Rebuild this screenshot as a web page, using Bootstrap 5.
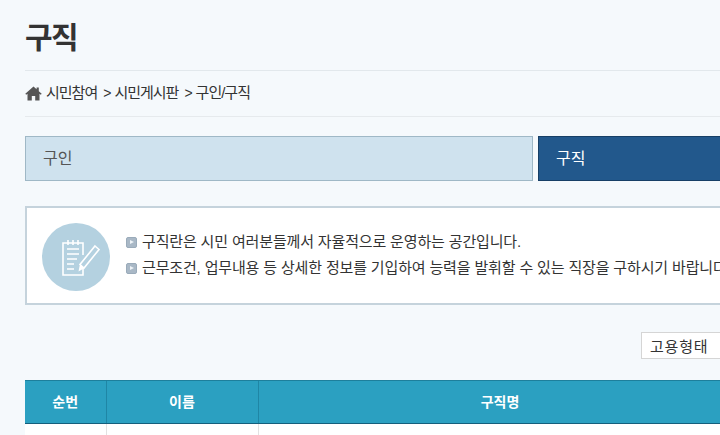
<!DOCTYPE html>
<html lang="ko">

<head>
    <meta charset="UTF-8">
    <title>구직</title>
    <link href="https://cdn.jsdelivr.net/npm/bootstrap@5.3.2/dist/css/bootstrap.min.css" rel="stylesheet">
    <style>
        html, body {
            overflow: hidden;
        }

        body {
            width: 720px;
            height: 435px;
            background: #f5f9fc;
            font-family: "Liberation Sans", "Noto Sans CJK KR", sans-serif;
            color: #333;
        }

        .page-wrap {
            width: 1021px;
            margin-left: 25px;
        }

        .page-title {
            height: 71px;
            margin: 0;
            padding-top: 19px;
            font-size: 30px;
            line-height: 38px;
            font-weight: 700;
            letter-spacing: -1.5px;
            color: #333;
            border-bottom: 1px solid #e2e8ec;
        }

        .crumbs {
            height: 46px;
            font-size: 15px;
            letter-spacing: -1px;
            color: #333;
            border-bottom: 1px solid #e6eaed;
        }

        .crumb-sep {
            font-size: 14px;
            margin: 0 4px 0 6px;
        }

        .tab-row {
            margin-top: 19px;
            gap: 5px;
        }

        .tab-item {
            flex: 1 1 0;
            height: 45px;
            padding-left: 17px;
            font-size: 16px;
            line-height: 43px;
            text-decoration: none;
        }

        .tab-off {
            background: #cfe2ee;
            border: 1px solid #9fb8c6;
            color: #555;
        }

        .tab-on {
            background: #22588c;
            border: 1px solid #173f66;
            color: #fff;
        }

        .info-box {
            margin-top: 25px;
            height: 99px;
            padding-left: 15px;
            background: #fff;
            border: 2px solid #c5d3dc;
            font-size: 15px;
            letter-spacing: -0.15px;
            color: #333;
            white-space: nowrap;
        }

        .info-icon {
            width: 68px;
            height: 68px;
            flex: none;
            margin-top: 2px;
            margin-right: 16px;
        }

        .info-lines {
            line-height: 26px;
            margin-bottom: 2px;
        }

        .bullet {
            display: inline-block;
            width: 11px;
            height: 11px;
            margin-right: 5px;
            vertical-align: -1px;
            background: #a9b8c6;
            border: 1px solid #9aabba;
            border-radius: 2px;
            position: relative;
        }

        .bullet::after {
            content: "";
            position: absolute;
            left: 3px;
            top: 2px;
            border-left: 4px solid #eef3f7;
            border-top: 2.5px solid transparent;
            border-bottom: 2.5px solid transparent;
        }

        .filter-row {
            margin-top: 27px;
            gap: 4px;
            height: 27px;
        }

        .filter-select {
            width: 100px;
            height: 27px;
            padding: 0 8px;
            font-size: 15px;
            letter-spacing: 0.8px;
            line-height: 27px;
            background: #fff;
            border: 1px solid #d5d5d5;
            color: #333;
        }

        .filter-input {
            width: 235px;
            height: 27px;
            background: #fff;
            border: 1px solid #d5d5d5;
        }

        .filter-btn {
            width: 62px;
            height: 27px;
            background: #22588c;
        }

        .job-table {
            margin-top: 21px;
            width: 100%;
            table-layout: fixed;
            border-collapse: collapse;
            font-size: 14px;
        }

        .job-table th {
            height: 43px;
            padding: 0;
            background: #2ba0c1;
            color: #fff;
            font-weight: 700;
            text-align: center;
            border-top: 1px solid #1d7f9c;
            border-bottom: 1px solid #155f7c;
            border-left: 1px solid #1f86a5;
        }

        .job-table th:first-child {
            border-left: 0;
        }

        .job-table td {
            height: 40px;
            background: #fff;
            border-left: 1px solid #e2e2e2;
        }

        .job-table td:first-child {
            border-left: 0;
        }
    </style>
</head>

<body>

    <div class="page-wrap">
        <h1 class="page-title">구직</h1>

        <div class="crumbs d-flex align-items-center">
            <svg width="17" height="15" viewBox="0 0 17 15">
                <path fill="#555" d="M8.5 0.5 L0.3 7.8 L1.2 8.8 L2.5 7.7 V14.5 H6.8 V10 H10.2 V14.5 H14.5 V7.7 L15.8 8.8 L16.7 7.8 L13.8 5.2 V1.5 H11.6 V3.2 Z"/>
            </svg>
            <span class="ms-1">시민참여</span>
            <span class="crumb-sep">&gt;</span>
            <span>시민게시판</span>
            <span class="crumb-sep">&gt;</span>
            <span>구인/구직</span>
        </div>

        <div class="tab-row d-flex">
            <a href="#" class="tab-item tab-off">구인</a>
            <a href="#" class="tab-item tab-on">구직</a>
        </div>

        <div class="info-box d-flex align-items-center">
            <svg class="info-icon" viewBox="0 0 68 68">
                <circle cx="34" cy="34" r="34" fill="#b4d1e0"/>
                <g fill="none" stroke="#fff" stroke-width="1.6">
                    <path d="M41 32 V20 H21 V52 H41 V44"/>
                    <path d="M26 17 V22 M31 17 V22 M36 17 V22"/>
                    <path d="M25 26 H37 M25 31 H37 M25 36 H35 M25 41 H32 M25 46 H32"/>
                    <path d="M53 23 L57 26.5 L42 45 L38 41.5 Z"/>
                </g>
                <path fill="#fff" d="M38 41 L42.5 45 L36.5 48.5 Z"/>
            </svg>
            <div class="info-lines">
                <div><span class="bullet"></span>구직란은 시민 여러분들께서 자율적으로 운영하는 공간입니다.</div>
                <div><span class="bullet"></span>근무조건, 업무내용 등 상세한 정보를 기입하여 능력을 발휘할 수 있는 직장을 구하시기 바랍니다.</div>
            </div>
        </div>

        <div class="filter-row d-flex justify-content-end">
            <div class="filter-select">고용형태</div>
            <div class="filter-input"></div>
            <div class="filter-btn"></div>
        </div>

        <table class="job-table">
            <colgroup>
                <col style="width: 81px">
                <col style="width: 152px">
                <col style="width: 484px">
                <col>
            </colgroup>
            <thead>
                <tr>
                    <th>순번</th>
                    <th>이름</th>
                    <th>구직명</th>
                    <th></th>
                </tr>
            </thead>
            <tbody>
                <tr>
                    <td></td>
                    <td></td>
                    <td></td>
                    <td></td>
                </tr>
            </tbody>
        </table>
    </div>

    <script src="https://cdn.jsdelivr.net/npm/bootstrap@5.3.2/dist/js/bootstrap.bundle.min.js"></script>
</body>

</html>
